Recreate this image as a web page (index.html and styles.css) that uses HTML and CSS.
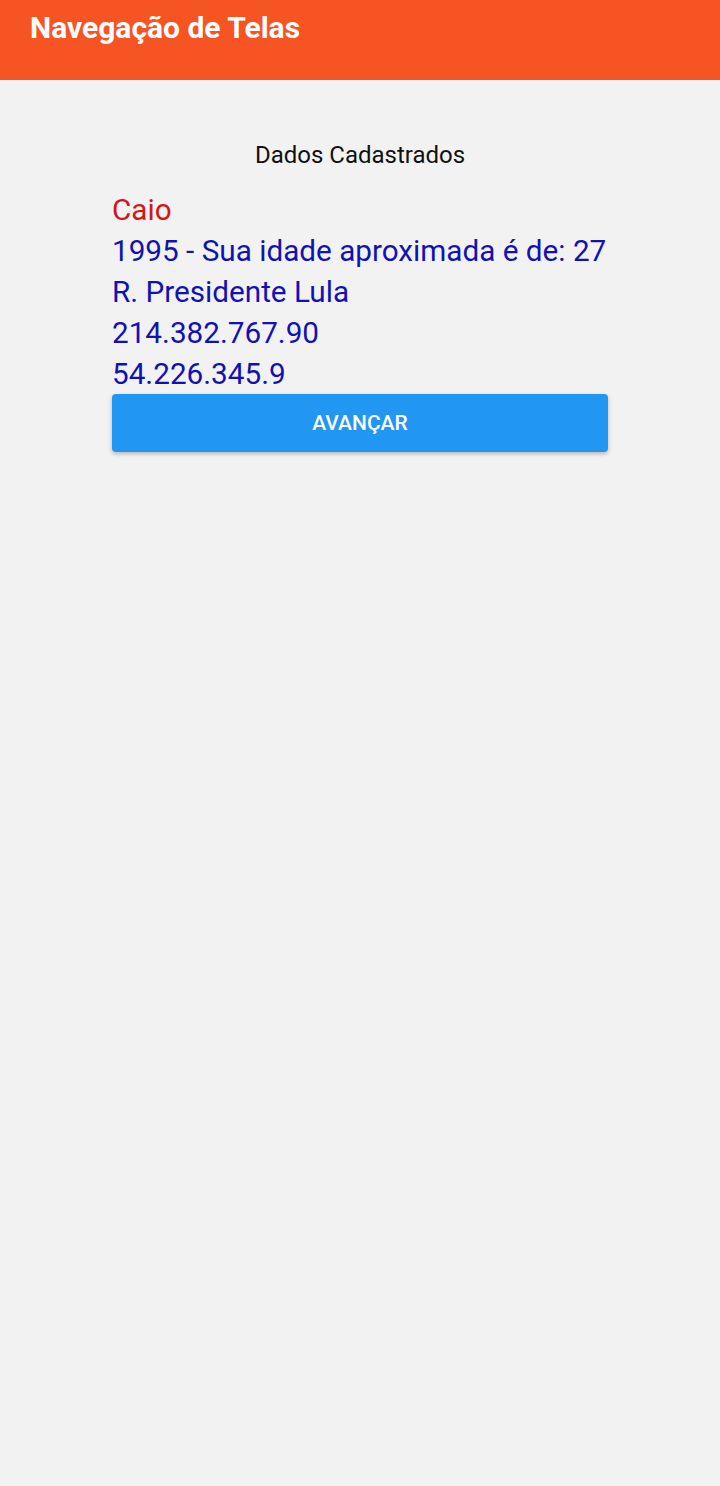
FILE: index.html
```html
<!DOCTYPE html>
<html lang="pt">
<head>
<meta charset="utf-8">
<link rel="stylesheet" href="styles.css">
</head>
<body>
<header class="appbar">
  <h1 class="appbar-title">Navegação de Telas</h1>
</header>
<main class="content">
  <div class="panel">
    <p class="heading">Dados Cadastrados</p>
    <div class="data">
      <p class="line name">Caio</p>
      <p class="line">1995 - Sua idade aproximada é de: 27</p>
      <p class="line">R. Presidente Lula</p>
      <p class="line">214.382.767.90</p>
      <p class="line">54.226.345.9</p>
    </div>
    <button class="btn">AVANÇAR</button>
  </div>
</main>
</body>
</html>
```
FILE: styles.css
```css
html, body {
  margin: 0;
  padding: 0;
  height: 100%;
}
body {
  background: #f2f2f2;
  font-family: Roboto, "Liberation Sans", sans-serif;
}
.appbar {
  background: #f65422;
  height: 80px;
  padding: 0 30px;
  box-sizing: border-box;
}
.appbar-title {
  margin: 0;
  padding-top: 10px;
  color: #fff;
  font-size: 30px;
  font-weight: 700;
  line-height: 36px;
}
.content {
  display: flex;
  justify-content: center;
}
.panel {
  width: 496px;
  padding-top: 60px;
  display: flex;
  flex-direction: column;
}
.heading {
  margin: 0;
  text-align: center;
  font-size: 24px;
  line-height: 30px;
  color: #111;
}
.data {
  margin-top: 19px;
}
.line {
  margin: 0;
  font-size: 29.7px;
  line-height: 41px;
  color: #1212b4;
}
.line.name {
  color: #d41616;
}
.btn {
  margin-top: 0;
  height: 58px;
  border: none;
  border-radius: 4px;
  background: #2196f3;
  color: #fff;
  font-family: Roboto, "Liberation Sans", sans-serif;
  font-size: 21px;
  font-weight: 500;
  box-shadow: 0 2px 4px rgba(0,0,0,0.25);
}
```
